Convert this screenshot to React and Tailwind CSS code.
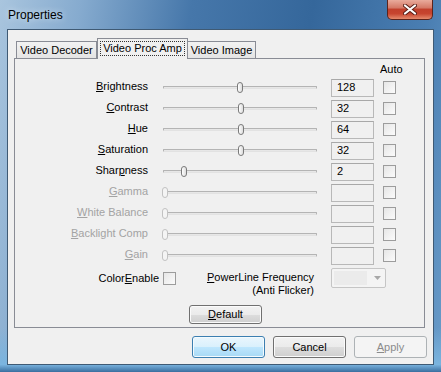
import React from "react"

const sliders = [
  { label: "Brightness", key: 0, value: "128", pos: 0.5 },
  { label: "Contrast", key: 0, value: "32", pos: 0.505 },
  { label: "Hue", key: 0, value: "64", pos: 0.505 },
  { label: "Saturation", key: 0, value: "32", pos: 0.505 },
  { label: "Sharpness", key: 4, value: "2", pos: 0.137 },
  { label: "Gamma", key: 0, disabled: true },
  { label: "White Balance", key: 0, disabled: true },
  { label: "Backlight Comp", key: 0, disabled: true },
  { label: "Gain", key: 0, disabled: true },
]

// label with an underlined access key
function Mn({ text, at }) {
  return (
    <>
      {text.slice(0, at)}
      <span className="underline underline-offset-[1px]">{text[at]}</span>
      {text.slice(at + 1)}
    </>
  )
}

function Checkbox({ disabled }) {
  return (
    <div
      className={
        "w-[13px] h-[13px] border shrink-0 " +
        (disabled ? "border-[#c4c4c4] bg-[#f4f4f4]" : "border-[#9c9c9c] bg-[linear-gradient(135deg,#e6e6e6,#fbfbfb)]")
      }
    />
  )
}

function Slider({ pos, disabled }) {
  const left = 5 + pos * 154 - 3
  return (
    <div className="relative w-[164px] h-[13px] ml-[10px] flex items-center">
      <div className="mx-[5px] flex-1 h-[3px] border border-[#b4b4b4] border-b-[#e2e2e2] bg-[#e7e7e7] rounded-[1px]" />
      <div
        className={
          "absolute top-[1px] w-[6px] h-[11px] rounded-[3px] border " +
          (disabled ? "border-[#c2c2c2] bg-[#f4f4f4]" : "border-[#7a7a7a] bg-[linear-gradient(to_right,#ffffff,#dcdcdc)]")
        }
        style={{ left: left + "px" }}
      />
    </div>
  )
}

function Button({ children, kind }) {
  let cls = "border-[#707070] bg-[linear-gradient(to_bottom,#f2f2f2_0%,#ebebeb_50%,#dddddd_51%,#cfcfcf_100%)] shadow-[inset_0_0_0_1px_#fbfbfb]"
  if (kind === "default") cls = "border-[#3c7fb1] bg-[linear-gradient(to_bottom,#eaf6fd_0%,#d9f0fc_50%,#bee6fd_51%,#a7d9f5_100%)] shadow-[inset_0_0_0_1px_#f4fbfe]"
  if (kind === "disabled") cls = "border-[#adb2b5] bg-[#f4f4f4] text-[#8b8b8b]"
  return (
    <div className={"w-[73px] h-[22px] rounded-[3px] border flex items-center justify-center " + cls}>
      {children}
    </div>
  )
}

export default function App() {
  return (
    <div className="w-[441px] h-[372px] flex flex-col overflow-hidden font-['Liberation_Sans',sans-serif] font-normal text-[11px] leading-[13px] text-black bg-[linear-gradient(to_bottom,transparent_88%,#7ab4df_98%,#3a6e9f_100%),linear-gradient(100deg,#a9c5de_0%,#86abcf_16%,#4677aa_38%,#35679b_62%,#4a7eb2_85%,#6a9cc9_100%)]">
      {/* title bar */}
      <div className="h-[29px] flex items-start shrink-0">
        <div className="pl-[8px] pt-[8px] text-[12px] leading-[14px] text-black [text-shadow:0_0_6px_#dfeaf4]">
          Properties
        </div>
        <div className="ml-auto mr-[8px] w-[46px] h-[20px] rounded-b-[5px] border border-t-0 border-[#5b241c] bg-[linear-gradient(to_bottom,#e9ab9c_0%,#d57a68_40%,#c2402c_50%,#c7452f_72%,#e58a6c_100%)] flex items-center justify-center">
          <svg width="14" height="11" viewBox="0 0 14 11">
            <path d="M2 1.5 L12 9.5 M12 1.5 L2 9.5" stroke="#5a1f17" strokeWidth="4" strokeLinecap="round" />
            <path d="M2 1.5 L12 9.5 M12 1.5 L2 9.5" stroke="#ffffff" strokeWidth="2.2" strokeLinecap="round" />
          </svg>
        </div>
      </div>

      {/* client area */}
      <div className="mx-[7px] mb-[7px] flex-1 border border-[#3f5a74] bg-[#f0f0f0] flex flex-col">
        {/* tabs */}
        <div className="mt-[8px] ml-[8px] h-[20px] flex items-end">
          <div className="w-[81px] h-[17px] border border-b-0 border-[#898c95] bg-[linear-gradient(to_bottom,#f2f2f2,#e4e4e4)] flex items-center justify-center pt-[1px]">
            Video Decoder
          </div>
          <div className="relative z-10 w-[91px] h-[21px] -mb-px border border-b-0 border-[#898c95] bg-[#f0f0f0] p-[2px] pb-[3px]">
            <div className="h-full border border-dotted border-[#333] flex items-center justify-center">
              Video Proc Amp
            </div>
          </div>
          <div className="w-[68px] h-[17px] border border-b-0 border-l-0 border-[#898c95] bg-[linear-gradient(to_bottom,#f2f2f2,#e4e4e4)] flex items-center justify-center pt-[1px]">
            Video Image
          </div>
        </div>

        {/* tab page */}
        <div className="ml-[6px] w-[411px] h-[270px] border border-[#898c95] bg-[#f0f0f0] flex flex-col">
          <div className="h-[18px] pl-[365px] flex items-end pb-[1px]">Auto</div>

          {sliders.map((s) => (
            <div key={s.label} className="h-[21px] flex items-center">
              <div className={"w-[133px] text-right pb-[3px] " + (s.disabled ? "text-[#a3a3a3]" : "")}>
                <Mn text={s.label} at={s.key} />
              </div>
              <Slider pos={s.disabled ? 0.013 : s.pos} disabled={s.disabled} />
              <div className="ml-[9px] w-[43px] h-[18px] border border-[#b8b8b8] border-t-[#a8a8a8] bg-[#f0f0f0] flex items-center pl-[5px]">
                {s.value}
              </div>
              <div className="ml-[9px]">
                <Checkbox />
              </div>
            </div>
          ))}

          <div className="h-[32px] mt-[1px] flex items-start">
            <div className="w-[144px] text-right mt-[5px]">
              Color<Mn text="Enable" at={0} />
            </div>
            <div className="ml-[4px] mt-[5px]">
              <Checkbox />
            </div>
            <div className="ml-[22px] w-[116px] text-right mt-[4px] whitespace-nowrap">
              <div>
                <Mn text="PowerLine Frequency" at={0} />
              </div>
              <div>(Anti Flicker)</div>
            </div>
            <div className="ml-[17px] w-[55px] h-[20px] mt-[1px] border border-[#c5c5c5] rounded-[2px] bg-[#f4f4f4] flex">
              <div className="m-[2px] w-[33px] bg-[#ebebeb]" />
              <div className="flex-1 flex items-center justify-center">
                <svg width="7" height="4" viewBox="0 0 7 4">
                  <path d="M0 0 H7 L3.5 4 Z" fill="#a8a8a8" />
                </svg>
              </div>
            </div>
          </div>

          <div className="mt-[6px] ml-[174px] w-[73px] h-[19px] rounded-[3px] border border-[#707070] bg-[linear-gradient(to_bottom,#f2f2f2_0%,#ebebeb_50%,#dddddd_51%,#cfcfcf_100%)] shadow-[inset_0_0_0_1px_#fbfbfb] flex items-center justify-center">
            <Mn text="Default" at={0} />
          </div>
        </div>

        {/* dialog buttons */}
        <div className="mt-[8px] pr-[6px] flex justify-end gap-[8px]">
          <Button kind="default">OK</Button>
          <Button>Cancel</Button>
          <Button kind="disabled">
            <Mn text="Apply" at={0} />
          </Button>
        </div>
      </div>
    </div>
  )
}
